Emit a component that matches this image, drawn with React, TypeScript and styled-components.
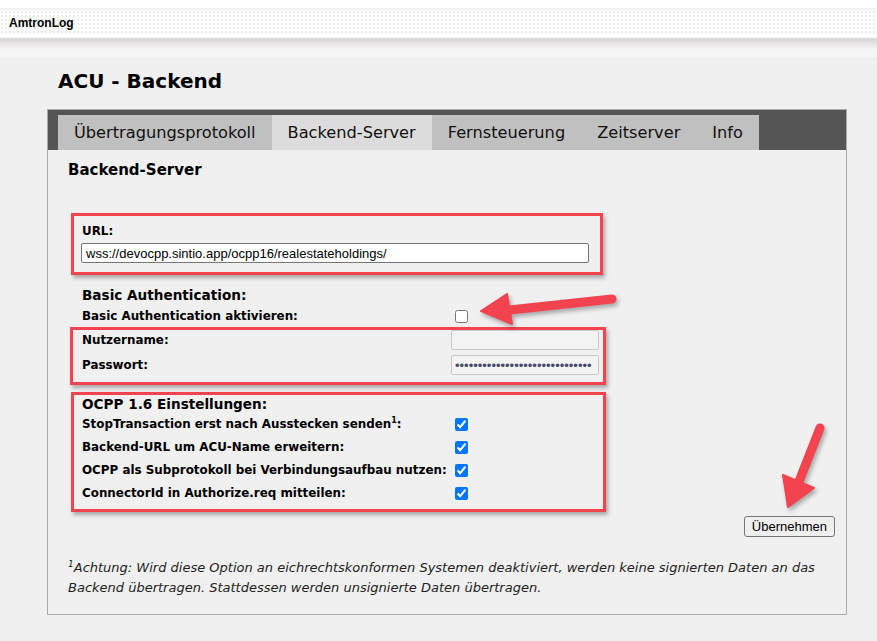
import * as React from 'react';
import styled, { createGlobalStyle } from 'styled-components';

const GlobalStyle = createGlobalStyle`
  body {
    margin: 0;
    background: #f0f0f0;
    font-family: "DejaVu Sans", Verdana, sans-serif;
    color: #000;
  }
`;

const RED = '#f2434f';

const Page = styled.div`
  position: relative;
  width: 877px;
  min-height: 641px;
  overflow: hidden;
`;

const TopStrip = styled.div`
  height: 8px;
  background: #fff;
`;

const HeaderBar = styled.div`
  height: 27px;
  display: flex;
  align-items: center;
  padding-left: 9px;
  font: bold 12px "Liberation Sans", Arial, sans-serif;
  color: #000;
  background-color: #fdfdfd;
  background-image: radial-gradient(#ececec 0.7px, transparent 1px);
  background-size: 4px 4px;
  border-top: 2px solid #f1f1f1;
  box-sizing: border-box;
`;

const HeaderShade = styled.div`
  height: 22px;
  background: linear-gradient(
    #ffffff 0,
    #ffffff 2px,
    #d8d3d6 4px,
    #e6e3e4 8px,
    #f4f4f4 14px,
    #f6f6f6 22px
  );
`;

const Main = styled.main`
  padding-left: 47px;
  width: 800px;
`;

const Title = styled.h1`
  margin: 12px 0 16px 11px;
  font-size: 20px;
  line-height: 24px;
  font-weight: bold;
`;

const Panel = styled.section`
  border: 1px solid #a9a9a9;
  background: #f0f0f0;
`;

const TabBar = styled.nav`
  display: flex;
  height: 40px;
  box-sizing: border-box;
  padding: 5px 0 0 10px;
  background: #555;
`;

const Tab = styled.div<{ $active?: boolean }>`
  height: 35px;
  display: flex;
  align-items: center;
  padding: 0 16px;
  font-size: 16.2px;
  color: #111;
  background: ${(p) => (p.$active ? '#dcdcdc' : '#c0c0c0')};
`;

const Body = styled.div`
  padding: 0 11px 16px 20px;
`;

const Heading = styled.h2`
  margin: 11px 0 0;
  font-size: 15px;
  line-height: 18px;
  font-weight: bold;
`;

const Group = styled.div<{ $left: number; $width: number; $top: number }>`
  box-sizing: border-box;
  width: ${(p) => p.$width}px;
  margin: ${(p) => p.$top}px 0 0 ${(p) => p.$left}px;
  padding-left: ${(p) => 11 - p.$left}px;
  border: 3px solid ${RED};
  box-shadow: 2px 3px 4px rgba(0, 0, 0, 0.3);
`;

const UrlGroup = styled(Group)`
  padding-top: 8px;
  padding-bottom: 9px;
`;

const Label = styled.label`
  display: block;
  font-size: 11.9px;
  line-height: 15px;
  font-weight: bold;
  white-space: nowrap;

  sup {
    font-size: 8px;
    line-height: 0;
  }
`;

const UrlInput = styled.input`
  display: block;
  box-sizing: border-box;
  width: 508px;
  height: 20px;
  margin: 4px 0 0 -1px;
  padding: 1px 4px;
  border: 1px solid #767676;
  border-radius: 2px;
  background: #fff;
  font: 13px "Liberation Sans", Arial, sans-serif;
  color: #000;
`;

const SectionTitle = styled.h3<{ $indent?: boolean }>`
  margin: ${(p) => (p.$indent ? '11px 0 0 14px' : '0')};
  font-size: 13.6px;
  line-height: 18px;
  font-weight: bold;
`;

const FormRow = styled.div<{ $height: number; $gap?: number }>`
  display: grid;
  grid-template-columns: 369px auto;
  align-items: center;
  height: ${(p) => p.$height}px;
  margin-top: ${(p) => p.$gap ?? 0}px;
`;

const OuterRow = styled(FormRow)`
  padding-left: 14px;
`;

const Check = styled.input.attrs({ type: 'checkbox' })`
  width: 13px;
  height: 13px;
  margin: 3px 3px 3px 4px;
`;

const FieldInput = styled.input`
  box-sizing: border-box;
  width: 148px;
  height: 20px;
  margin: 0;
  padding: 1px 3px;
  border: 1px solid #c9c9c9;
  border-radius: 2px;
  background: #f3f3f3;
  font: 13px "Liberation Sans", Arial, sans-serif;
  color: #444a66;
`;

const CredGroup = styled(Group)`
  padding-bottom: 7px;
`;

const OcppGroup = styled(Group)`
  padding-bottom: 4px;
`;

const ButtonRow = styled.div`
  display: flex;
  justify-content: flex-end;
  margin-top: 4px;
`;

const Button = styled.button`
  height: 21px;
  padding: 1px 7px;
  border: 1px solid #767676;
  border-radius: 3px;
  background: #efefef;
  font: 13px "Liberation Sans", Arial, sans-serif;
  color: #000;
`;

const Footnote = styled.p`
  margin: 21px 0 0;
  font-size: 13px;
  line-height: 20px;
  font-style: italic;
  color: #222;
  white-space: nowrap;

  sup {
    font-size: 9px;
    line-height: 0;
  }
`;

const Overlay = styled.svg`
  position: absolute;
  left: 0;
  top: 0;
  pointer-events: none;
  filter: drop-shadow(2px 3px 2px rgba(0, 0, 0, 0.3));
`;

const tabs = ['Übertragungsprotokoll', 'Backend-Server', 'Fernsteuerung', 'Zeitserver', 'Info'];

const ocppOptions = [
  { label: 'StopTransaction erst nach Ausstecken senden', note: true },
  { label: 'Backend-URL um ACU-Name erweitern' },
  { label: 'OCPP als Subprotokoll bei Verbindungsaufbau nutzen' },
  { label: 'ConnectorId in Authorize.req mitteilen' },
];

const Arrows: React.FC = () => (
  <Overlay width={877} height={641} viewBox="0 0 877 641">
    <g fill={RED} stroke={RED} strokeLinecap="round" strokeLinejoin="round">
      <line x1={612} y1={299} x2={500} y2={311} strokeWidth={9} />
      <polygon points="481,311 507,294 512,324" strokeWidth={2} />
      <line x1={820} y1={428} x2={798} y2={484} strokeWidth={9} />
      <polygon points="788,507 783,475 814,488" strokeWidth={2} />
    </g>
  </Overlay>
);

const App: React.FC = () => (
  <Page>
    <GlobalStyle />
    <TopStrip />
    <HeaderBar>AmtronLog</HeaderBar>
    <HeaderShade />
    <Main>
      <Title>ACU - Backend</Title>
      <Panel>
        <TabBar>
          {tabs.map((t) => (
            <Tab key={t} $active={t === 'Backend-Server'}>
              {t}
            </Tab>
          ))}
        </TabBar>
        <Body>
          <Heading>Backend-Server</Heading>

          <UrlGroup $left={3} $width={532} $top={34}>
            <Label>URL:</Label>
            <UrlInput
              readOnly
              value="wss://devocpp.sintio.app/ocpp16/realestateholdings/"
            />
          </UrlGroup>

          <SectionTitle $indent>Basic Authentication:</SectionTitle>
          <OuterRow $height={20} $gap={2}>
            <Label>Basic Authentication aktivieren:</Label>
            <Check readOnly />
          </OuterRow>

          <CredGroup $left={2} $width={536} $top={1}>
            <FormRow $height={20}>
              <Label>Nutzername:</Label>
              <FieldInput readOnly value="" />
            </FormRow>
            <FormRow $height={20} $gap={5}>
              <Label>Passwort:</Label>
              <FieldInput type="password" readOnly value="123456789012345678901234567890" />
            </FormRow>
          </CredGroup>

          <OcppGroup $left={3} $width={535} $top={7}>
            <SectionTitle>OCPP 1.6 Einstellungen:</SectionTitle>
            {ocppOptions.map((o) => (
              <FormRow key={o.label} $height={23}>
                <Label>
                  {o.label}
                  {o.note && <sup>1</sup>}:
                </Label>
                <Check defaultChecked />
              </FormRow>
            ))}
          </OcppGroup>

          <ButtonRow>
            <Button>Übernehmen</Button>
          </ButtonRow>

          <Footnote>
            <sup>1</sup>Achtung: Wird diese Option an eichrechtskonformen Systemen deaktiviert, werden keine
            signierten Daten an das
            <br />
            Backend übertragen. Stattdessen werden unsignierte Daten übertragen.
          </Footnote>
        </Body>
      </Panel>
    </Main>
    <Arrows />
  </Page>
);

export default App;
